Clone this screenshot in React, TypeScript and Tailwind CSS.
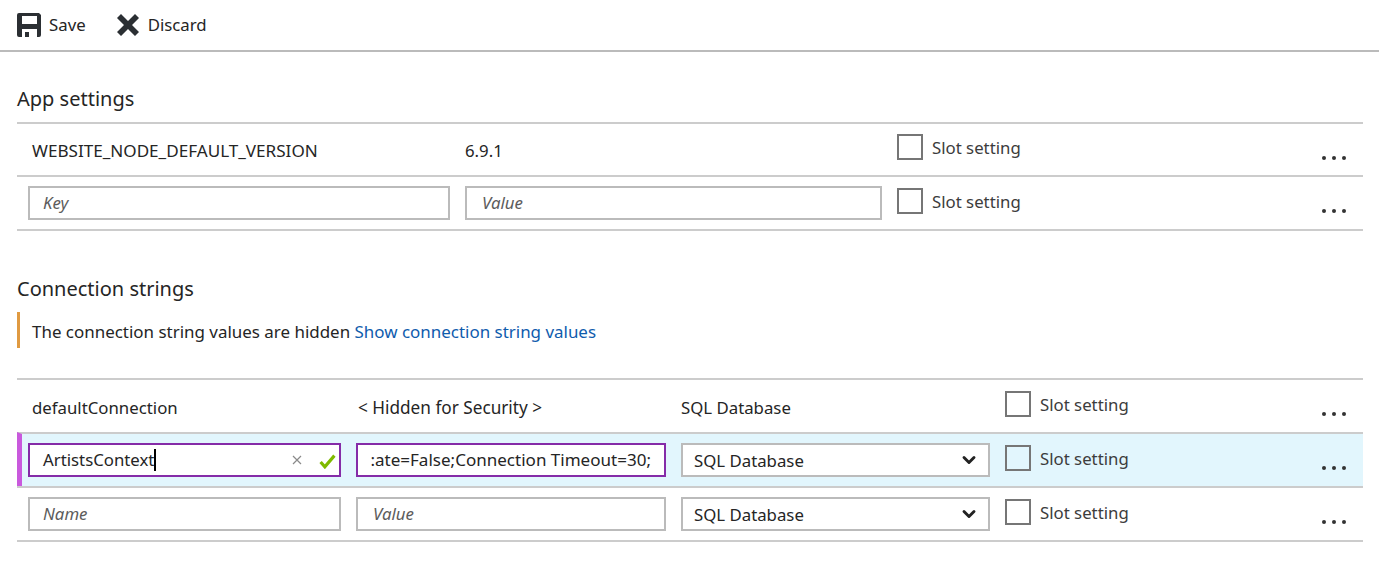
import type { ReactNode } from 'react';
import { ChevronDown } from 'lucide-react';

const cellBase = 'h-[34px] border-2 bg-white flex items-center text-[16.8px] overflow-hidden whitespace-nowrap';
const cellInput = `${cellBase} border-[#bbbbbb] px-[13px]`;
const cellFocus = `${cellBase} border-[#852ca8] px-[13px]`;

function Placeholder({ text, shift }: { text: string; shift?: boolean }) {
  return <span className={`italic text-[#5c5c5c] ${shift ? 'ml-[2px]' : ''}`}>{text}</span>;
}

function SlotSetting({ dim }: { dim?: boolean }) {
  return (
    <div className="flex items-start gap-[9px]">
      <div className={`w-[26px] h-[26px] border-2 border-[#767676] ${dim ? 'bg-[#e2f6fd]' : 'bg-white'}`} />
      <span className="text-[16.8px] leading-[24px] mt-[2px] text-[#3c3c3c]">Slot setting</span>
    </div>
  );
}

function More() {
  return (
    <div className="flex gap-[6px] ml-auto mr-[17px] mt-[32px]">
      <div className="w-[4px] h-[4px] rounded-full bg-[#333333]" />
      <div className="w-[4px] h-[4px] rounded-full bg-[#333333]" />
      <div className="w-[4px] h-[4px] rounded-full bg-[#333333]" />
    </div>
  );
}

function SqlSelect() {
  return (
    <div className={`${cellBase} border-[#bbbbbb] pl-[11px] pr-[9px] w-[309px] ml-[15px] justify-between`}>
      <span className="pt-[1px]">SQL Database</span>
      <ChevronDown size={20} strokeWidth={3.5} className="text-[#222222]" />
    </div>
  );
}

function AppRow({ first, children }: { first?: boolean; children: ReactNode }) {
  return <div className={`flex ${first ? 'h-[53px]' : 'h-[54px]'} border-t-2 border-[#cccccc] pl-[11px]`}>{children}</div>;
}

function ConnRow({ active, children }: { active?: boolean; children: ReactNode }) {
  return (
    <div className={`flex h-[54px] border-t-2 border-[#cccccc] ${active ? 'bg-[#e2f6fd] border-l-[5px] border-l-[#c959dd] pl-[6px]' : 'pl-[11px]'}`}>
      {children}
    </div>
  );
}

export default function App() {
  return (
    <div className="w-[1379px] h-[573px] bg-white text-[#252525] font-['Noto_Sans','Open_Sans',sans-serif] overflow-hidden">
      <div className="flex items-center h-[52px] border-b-2 border-[#bbbbbb] pl-[17px] text-[16.8px]">
        <svg width="24" height="24" viewBox="0 0 24 24" className="mr-[8px]">
          <path fill="#2b2f33" fillRule="evenodd" d="M2 0h20l2 2v20a2 2 0 0 1-2 2H2a2 2 0 0 1-2-2V2a2 2 0 0 1 2-2ZM5 3v8h15V3ZM5 16v8h3v-5h4v5h8v-8Z" />
        </svg>
        <span>Save</span>
        <svg width="22" height="22" viewBox="0 0 22 22" className="ml-[31px] mr-[9px]">
          <path fill="#2b2f33" d="M4 0l7 7 7-7 4 4-7 7 7 7-4 4-7-7-7 7-4-4 7-7-7-7z" />
        </svg>
        <span>Discard</span>
      </div>

      <div className="pl-[17px] pr-[16px]">
        <h2 className="text-[20px] leading-[28px] mt-[33px] mb-[9px]">App settings</h2>

        <div className="border-b-2 border-[#cccccc]">
          <AppRow first>
            <div className="w-[422px] pl-[4px] pt-[15px] text-[17.1px] leading-[24px]">WEBSITE_NODE_DEFAULT_VERSION</div>
            <div className="w-[447px] pl-[15px] pt-[15px] text-[16.8px] leading-[24px]">6.9.1</div>
            <div className="pt-[10px]"><SlotSetting /></div>
            <More />
          </AppRow>
          <AppRow>
            <div className={`${cellInput} w-[422px] mt-[9px]`}><Placeholder text="Key" /></div>
            <div className={`${cellInput} w-[417px] ml-[15px] mt-[9px]`}><Placeholder text="Value" shift /></div>
            <div className="ml-[15px] pt-[11px]"><SlotSetting /></div>
            <More />
          </AppRow>
        </div>

        <h2 className="text-[20px] leading-[28px] mt-[44px] mb-[9px]">Connection strings</h2>

        <div className="h-[36px] border-l-[3px] border-[#e09a41] pl-[12px] pt-[3px] flex items-center text-[16.95px] mb-[30px]">
          The connection string values are hidden&nbsp;
          <span className="text-[#0f5cad]">Show connection string values</span>
        </div>

        <div className="border-b-2 border-[#cccccc]">
          <ConnRow>
            <div className="w-[313px] pl-[4px] pt-[16px] text-[16.8px] leading-[24px]">defaultConnection</div>
            <div className="w-[325px] pl-[17px] pt-[16px] text-[17.2px] leading-[24px]">&lt; Hidden for Security &gt;</div>
            <div className="w-[339px] pl-[15px] pt-[16px] text-[16.8px] leading-[24px]">SQL Database</div>
            <div className="pt-[11px]"><SlotSetting /></div>
            <More />
          </ConnRow>
          <ConnRow active>
            <div className={`${cellFocus} w-[313px] mt-[9px] relative`}>
              <span>ArtistsContext</span>
              <span className="w-[2px] h-[22px] bg-black" />
              <svg width="10" height="10" viewBox="0 0 10 10" className="absolute right-[37px] top-[10px]">
                <path d="M1 1l8 8M9 1l-8 8" stroke="#8a8a8a" strokeWidth="1.200" />
              </svg>
              <svg width="17" height="15" viewBox="0 0 16 14" className="absolute right-[3px] top-[9px]">
                <path d="M1.500 7.500l4 4.500 9-10.500" fill="none" stroke="#7fba00" strokeWidth="3" />
              </svg>
            </div>
            <div className={`${cellFocus} w-[310px] ml-[15px] mt-[9px] justify-end`}>
              <span className="text-[17.05px]">:ate=False;Connection Timeout=30;</span>
            </div>
            <div className="mt-[9px]"><SqlSelect /></div>
            <div className="ml-[15px] pt-[11px]"><SlotSetting dim /></div>
            <More />
          </ConnRow>
          <ConnRow>
            <div className={`${cellInput} w-[313px] mt-[9px]`}><Placeholder text="Name" /></div>
            <div className={`${cellInput} w-[310px] ml-[15px] mt-[9px]`}><Placeholder text="Value" shift /></div>
            <div className="mt-[9px]"><SqlSelect /></div>
            <div className="ml-[15px] pt-[11px]"><SlotSetting /></div>
            <More />
          </ConnRow>
        </div>
      </div>
    </div>
  );
}
